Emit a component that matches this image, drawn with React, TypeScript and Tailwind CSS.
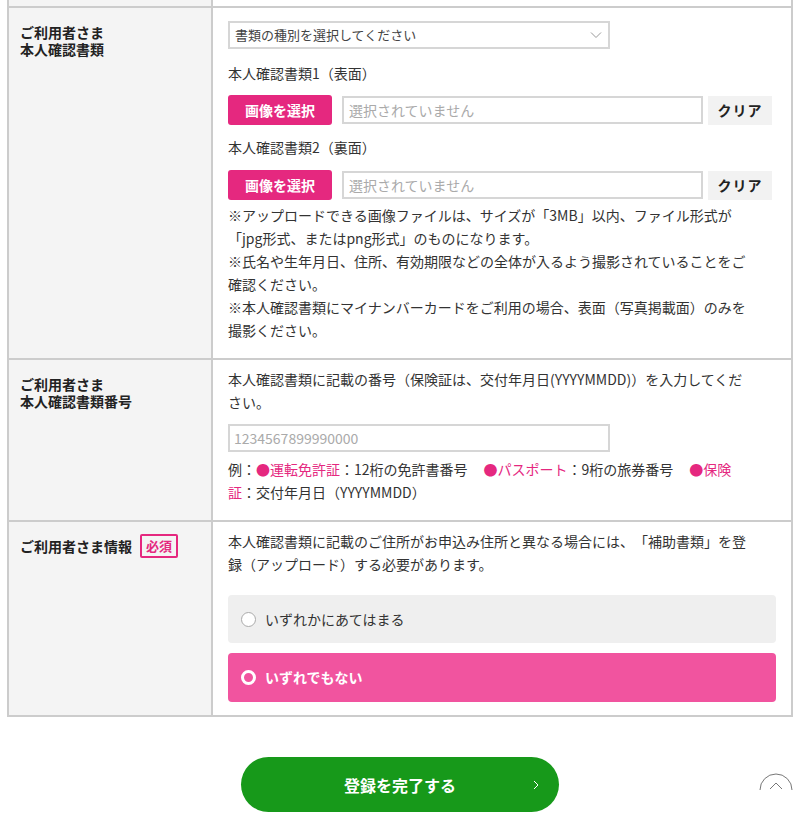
import React from "react";

const font = { fontFamily: '"Noto Sans CJK JP", "Noto Sans", sans-serif' };

function FileRow() {
  return (
    <div className="flex items-center">
      <button className="h-[30px] w-[104px] rounded-[3px] bg-[#e5287f] text-[14px] font-bold text-white">
        画像を選択
      </button>
      <div className="ml-[10px] flex h-[28px] w-[361px] items-center border-2 border-[#d6d6d6] px-[5px] text-[14px] text-[#aaaaaa]">
        選択されていません
      </div>
      <button className="ml-[5px] h-[29px] w-[64px] bg-[#f2f2f2] text-[14px] font-bold tracking-[1px] text-[#222]">
        クリア
      </button>
    </div>
  );
}

function Label({ lines }: { lines: string[] }) {
  return (
    <div className="flex flex-col gap-[1px] border-r-2 border-[#cccccc] bg-[#f4f4f4] px-[11px] pt-[16px] text-[14px] font-bold leading-[16px] text-[#222]">
      {lines.map((l) => (
        <div key={l}>{l}</div>
      ))}
    </div>
  );
}

export default function App() {
  return (
    <div className="min-h-[829px] bg-white text-[#333] [text-spacing-trim:space-all]" style={font}>
      <div className="relative px-[7px]">
        <div className="border-x-2 border-b-2 border-[#cccccc]">
          {/* tail of the row above */}
          <div className="grid h-[6px] grid-cols-[204px_1fr]">
            <div className="border-r-2 border-[#cccccc] bg-[#f4f4f4]" />
            <div />
          </div>

          {/* row 1 */}
          <div className="grid grid-cols-[204px_1fr] border-t-2 border-[#cccccc]">
            <Label lines={["ご利用者さま", "本人確認書類"]} />
            <div className="px-[15px] pb-[16px] pt-[13px] text-[14px]">
              <div className="flex h-[28px] w-[382px] items-center justify-between border-2 border-[#d6d6d6] pl-[5px] pr-[6px] text-[13px] text-[#444]">
                <span>書類の種別を選択してください</span>
                <svg width="12" height="8" viewBox="0 0 12 8" fill="none">
                  <path d="M1 1.5 L6 6.5 L11 1.5" stroke="#999" strokeWidth="1" />
                </svg>
              </div>
              <div className="mt-[13px] leading-[22px]">本人確認書類1（表面）</div>
              <div className="mt-[11px]">
                <FileRow />
              </div>
              <div className="mt-[11px] leading-[22px]">本人確認書類2（裏面）</div>
              <div className="mt-[12px]">
                <FileRow />
              </div>
              <p className="mt-[4px] whitespace-nowrap leading-[23px]">
                ※アップロードできる画像ファイルは、サイズが「3MB」以内、ファイル形式が
                <br />
                「jpg形式、またはpng形式」のものになります。
                <br />
                ※氏名や生年月日、住所、有効期限などの全体が入るよう撮影されていることをご
                <br />
                確認ください。
                <br />
                ※本人確認書類にマイナンバーカードをご利用の場合、表面（写真掲載面）のみを
                <br />
                撮影ください。
              </p>
            </div>
          </div>

          {/* row 2 */}
          <div className="grid grid-cols-[204px_1fr] border-t-2 border-[#cccccc]">
            <Label lines={["ご利用者さま", "本人確認書類番号"]} />
            <div className="px-[15px] pb-[16px] pt-[8px] text-[14px]">
              <p className="whitespace-nowrap leading-[23px]">
                本人確認書類に記載の番号（保険証は、交付年月日(YYYYMMDD)）を入力してくだ
                <br />
                さい。
              </p>
              <div className="mt-[10px] flex h-[28px] w-[382px] items-center border-2 border-[#d6d6d6] px-[4px] text-[14px] text-[#aaaaaa]">
                1234567899990000
              </div>
              <p className="mt-[6px] whitespace-nowrap leading-[23px]">
                例：<span className="text-[#e5287f]">●運転免許証</span>：12桁の免許書番号
                <span className="ml-[16px] text-[#e5287f]">●パスポート</span>：9桁の旅券番号
                <span className="ml-[16px] text-[#e5287f]">●保険</span>
                <br />
                <span className="text-[#e5287f]">証</span>：交付年月日（YYYYMMDD）
              </p>
            </div>
          </div>

          {/* row 3 */}
          <div className="grid grid-cols-[204px_1fr] border-t-2 border-[#cccccc]">
            <div className="border-r-2 border-[#cccccc] bg-[#f4f4f4] px-[11px] pt-[12px]">
              <div className="flex items-center text-[14px] font-bold text-[#222]">
                ご利用者さま情報
                <span className="ml-[8px] flex h-[24px] items-center rounded-[2px] border-2 border-[#e5287f] px-[4px] text-[13px] text-[#e5287f]">
                  必須
                </span>
              </div>
            </div>
            <div className="px-[15px] pb-[13px] pt-[8px] text-[14px]">
              <p className="whitespace-nowrap leading-[23px]">
                本人確認書類に記載のご住所がお申込み住所と異なる場合には、「補助書類」を登
                <br />
                録（アップロード）する必要があります。
              </p>
              <div className="mt-[19px] flex h-[48px] items-center rounded-[4px] bg-[#efefef] px-[13px]">
                <span className="h-[15px] w-[15px] rounded-full border border-[#aaaaaa] bg-white" />
                <span className="ml-[9px] text-[14px] text-[#333]">いずれかにあてはまる</span>
              </div>
              <div className="mt-[10px] flex h-[49px] items-center rounded-[4px] bg-[#f1549f] px-[13px]">
                <span className="h-[15px] w-[15px] rounded-full border-[3px] border-white bg-[#f1549f]" />
                <span className="ml-[9px] text-[14px] font-bold text-white">いずれでもない</span>
              </div>
            </div>
          </div>
        </div>

        <div className="mt-[40px] flex justify-center">
          <button className="relative h-[55px] w-[318px] rounded-full bg-[#17991a] text-[16px] font-bold text-white">
            登録を完了する
            <svg
              className="absolute right-[20px] top-[23px]"
              width="6"
              height="10"
              viewBox="0 0 6 10"
              fill="none"
            >
              <path d="M1 1 L5 5 L1 9" stroke="#ffffff" strokeWidth="1" />
            </svg>
          </button>
        </div>

        <svg
          className="absolute right-[6px] top-[770px]"
          width="36"
          height="24"
          viewBox="0 0 36 24"
          fill="none"
        >
          <path d="M2 20 A16 16 0 0 1 34 20" stroke="#777" strokeWidth="1" />
          <path d="M12 19 L18 13 L24 19" stroke="#777" strokeWidth="1" />
        </svg>
      </div>
    </div>
  );
}
